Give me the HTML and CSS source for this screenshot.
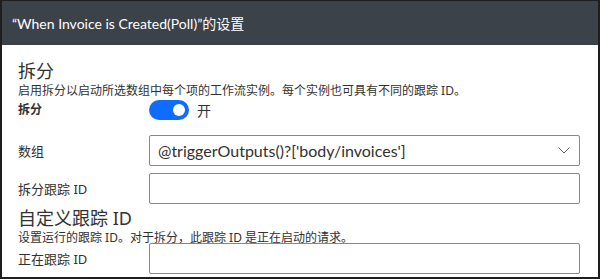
FILE: index.html
```html
<!DOCTYPE html>
<html lang="zh-CN">
<head>
    <meta charset="UTF-8">
    <title>设置</title>
    <link rel="stylesheet" href="styles.css">
</head>
<body>
    <div class="panel">
        <div class="panel-header">“When Invoice is Created(Poll)”的设置</div>

        <div class="panel-body">
            <div class="section-title">拆分</div>
            <div class="section-desc">启用拆分以启动所选数组中每个项的工作流实例。每个实例也可具有不同的跟踪 ID。</div>

            <div class="toggle-row">
                <span class="bold-label">拆分</span>
                <span class="toggle"><span class="thumb"></span></span>
                <span class="toggle-text">开</span>
            </div>

            <div class="field-row first">
                <label class="field-label">数组</label>
                <div class="field-box select">
                    <span class="field-value">@triggerOutputs()?['body/invoices']</span>
                    <svg class="chevron" width="12" height="7" viewBox="0 0 12 7">
                        <path d="M0.5 0.5 L6 6 L11.5 0.5" fill="none" stroke="#605e5c" stroke-width="1"/>
                    </svg>
                </div>
            </div>

            <div class="field-row">
                <label class="field-label">拆分跟踪 ID</label>
                <div class="field-box"></div>
            </div>

            <div class="section-title second">自定义跟踪 ID</div>
            <div class="section-desc">设置运行的跟踪 ID。对于拆分，此跟踪 ID 是正在启动的请求。</div>

            <div class="field-row last">
                <label class="field-label">正在跟踪 ID</label>
                <div class="field-box"></div>
            </div>
        </div>
    </div>
</body>
</html>
```

FILE: styles.css
```css
body {
    margin: 0;
    font-family: "Noto Sans", "Noto Sans CJK SC", sans-serif;
    color: #323130;
    background: #ffffff;
}
.panel {
    height: 279px;
    box-sizing: border-box;
    border: 2px solid #1e1e1e;
    border-top-width: 1px;
    overflow: hidden;
}
.panel-header {
    height: 44px;
    background-color: #3b4249;
    color: #ffffff;
    font-family: Lato, "Noto Sans CJK SC", sans-serif;
    font-size: 14px;
    line-height: 46px;
    padding-left: 10px;
}
.panel-body {
    padding: 14px 18px 0 16px;
}
.section-title {
    font-size: 18px;
    line-height: 24px;
}
.section-title.second {
    margin-top: 2px;
}
.section-desc {
    font-size: 12px;
    line-height: 16px;
}
.toggle-row {
    display: flex;
    align-items: center;
    height: 20px;
    margin-top: 1px;
}
.bold-label {
    width: 131px;
    font-size: 12px;
    font-weight: bold;
    align-self: flex-start;
}
.toggle {
    width: 40px;
    height: 20px;
    box-sizing: border-box;
    border-radius: 10px;
    background-color: #0f6cff;
    display: flex;
    align-items: center;
    justify-content: flex-end;
    padding-right: 4px;
}
.thumb {
    width: 12px;
    height: 12px;
    border-radius: 50%;
    background: #ffffff;
}
.toggle-text {
    font-size: 14px;
    margin-left: 8px;
}
.field-row {
    display: grid;
    grid-template-columns: 131px 1fr;
    align-items: center;
    margin-top: 7px;
}
.field-row.first {
    margin-top: 15px;
}
.field-row.last {
    margin-top: -3px;
}
.field-label {
    font-size: 13px;
}
.field-box {
    height: 31px;
    box-sizing: border-box;
    border: 1px solid #8a8886;
    border-radius: 2px;
    display: flex;
    align-items: center;
    padding: 0 8px;
}
.field-value {
    flex: 1;
    font-family: Lato, sans-serif;
    font-size: 16px;
}
.chevron {
    margin-right: 1px;
}
```
